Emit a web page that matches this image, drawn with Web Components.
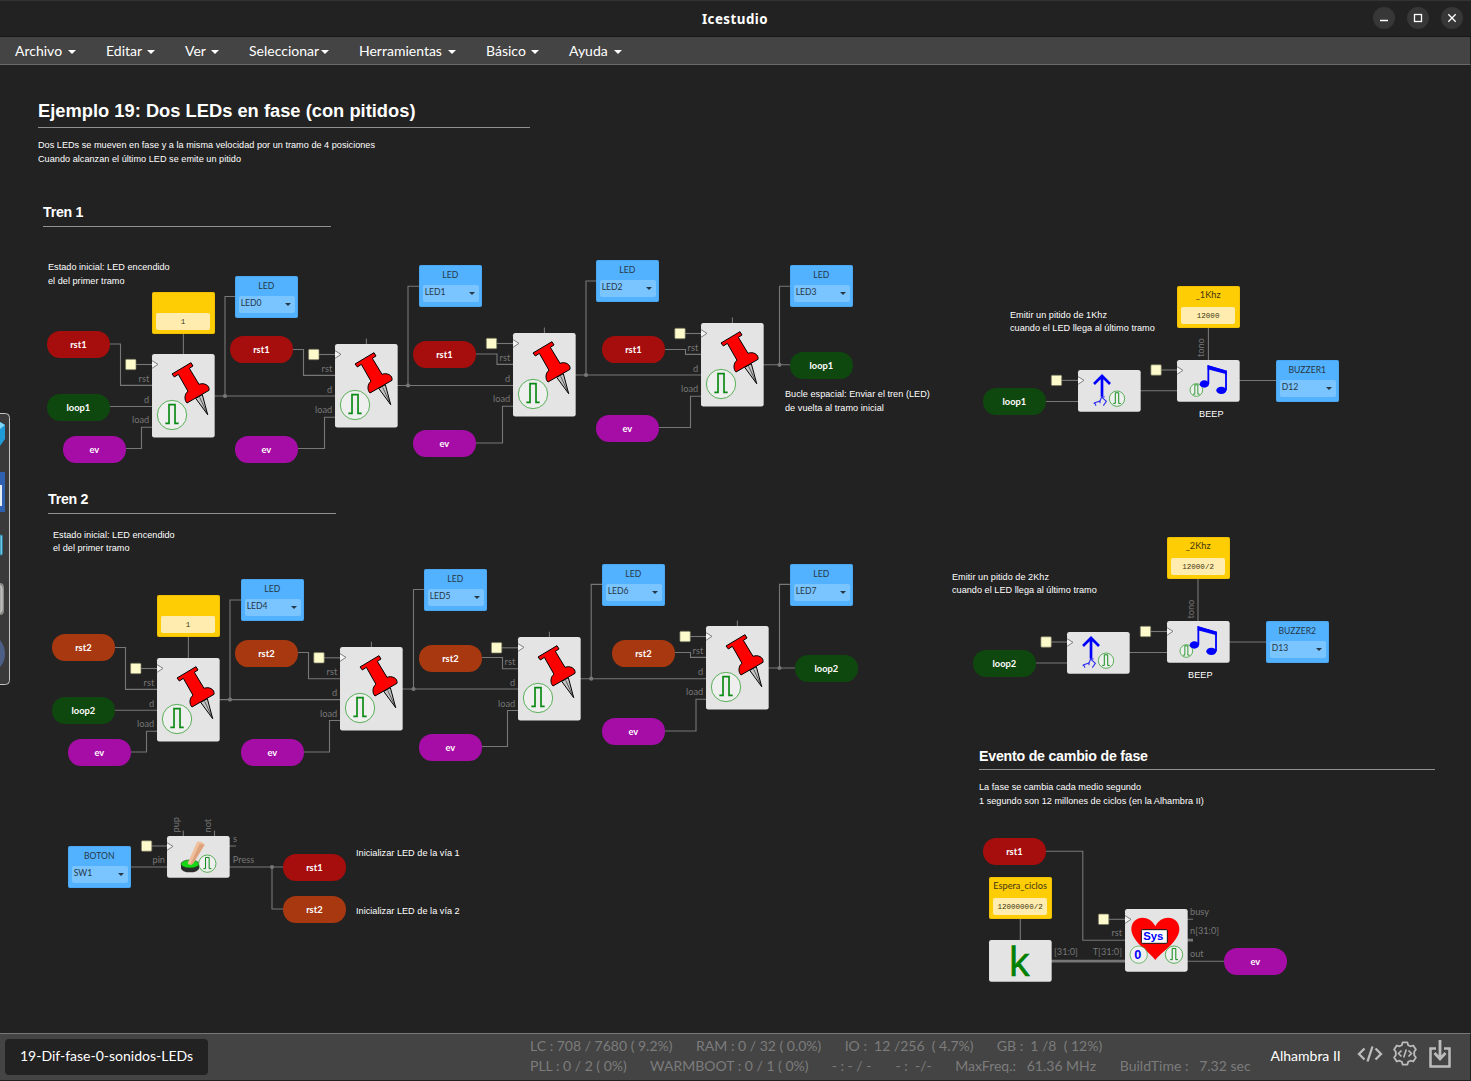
<!DOCTYPE html>
<html lang="es">
<head>
<meta charset="utf-8">
<title>Icestudio</title>
<style>
html,body{margin:0;height:100%;background:#222;overflow:hidden}
body{font-family:Lato,"Liberation Sans",sans-serif}
</style>
</head>
<body>
<ice-app></ice-app>
<script>
const TOP = 65;
const define = (name, render, css) => customElements.define(name, class extends HTMLElement {
  connectedCallback() {
    if (this.shadowRoot) return;
    const root = this.attachShadow({mode: 'open'});
    root.innerHTML = `<style>${css}</style>` + render(this);
  }
});
/* Diagram nodes live on a free canvas and carry their own coordinates. */
const defineNode = (name, render, css = '') => customElements.define(name, class extends HTMLElement {
  connectedCallback() {
    if (this.shadowRoot) return;
    const root = this.attachShadow({mode: 'open'});
    const x = +this.getAttribute('x'), y = +this.getAttribute('y') - TOP;
    root.innerHTML = `<style>:host{position:absolute;left:${x}px;top:${y}px;display:block;box-sizing:border-box}${css}</style>` + render(this);
  }
});

define('window-bar', () => `
  <span class="side"></span><span class="title"><slot></slot></span>
  <span class="side btns">
    <svg viewBox="0 0 22 22"><path d="M7 13.5h8"/></svg>
    <svg viewBox="0 0 22 22"><rect x="7.5" y="7.5" width="7" height="7"/></svg>
    <svg viewBox="0 0 22 22"><path d="M7.3 7.3l7.4 7.4M14.7 7.3l-7.4 7.4"/></svg>
  </span>`, `
  :host{display:flex;height:37px;box-sizing:border-box;background:#222;border-top:1px solid #333;border-bottom:1px solid #171717;align-items:center;color:#fff}
  .side{flex:1;display:flex;justify-content:flex-end}
  .btns{gap:12px;padding-right:8px;box-sizing:border-box;position:relative;top:-.5px}
  .title{font:bold 13.3px "Noto Sans",sans-serif;letter-spacing:.5px;padding-left:7px}
  svg{width:22px;height:22px;background:#373737;border-radius:50%;fill:none;stroke:#fff;stroke-width:1.3}`);

define('menu-item', () => `<span><slot></slot></span><i></i>`, `
  :host{display:flex;align-items:center;padding:0 15px;box-sizing:border-box;justify-content:space-between}
  i{border:4px solid transparent;border-top-color:#fff;border-bottom:0;margin-top:2px}`);

define('menu-bar', () => `<slot></slot>`, `
  :host{display:flex;height:28px;box-sizing:border-box;background:#444;border-bottom:1px solid #6b6b6b;color:#fff;font-size:14px;border-right:1px solid #222}`);

defineNode('ice-note', el => {
  const rows = el.getAttribute('rows').split('|'), lens = (el.getAttribute('lens') || '').split('|');
  const size = el.getAttribute('size') || 9.14, lh = +(el.getAttribute('lh') || 13.7);
  return `<svg width="1" height="1">${rows.map((r, i) => `<text x="0" y="${i * lh}" ${lens[i] ? `textLength="${lens[i]}"` : ''} style="font-size:${size}px">${r}</text>`).join('')}</svg>`;
}, `svg{overflow:visible;display:block;fill:#fff;font-family:"Liberation Sans",sans-serif} :host([bold]) svg{font-weight:bold}`);

defineNode('ice-rule', el => `<div style="width:${el.getAttribute('w')}px"></div>`, `div{height:1px;background:#909090}`);

defineNode('ice-label', el => `<span><slot></slot></span>`, `
  :host{width:62.7px;height:26.4px;border-radius:13.2px;background:var(--c);display:flex;align-items:center;justify-content:center;color:#fff;font:bold 9.3px Lato,sans-serif}
  :host([kind=rst1]){--c:#a60d0d} :host([kind=rst2]){--c:#a83810} :host([kind=loop]){--c:#0f480f} :host([kind=ev]){--c:#a60da6}`);

defineNode('ice-io', el => `<b>${el.getAttribute('name')}</b><div><span>${el.getAttribute('pin')}</span><i></i></div>`, `
  :host{width:62.7px;height:41.8px;border-radius:2px;background:#53b2ff;color:#263746;font:8.6px Lato,sans-serif;display:flex;flex-direction:column;padding:3.6px 3.2px 4.4px 4px;align-items:stretch;box-shadow:inset 0 0 0 .5px #2d7dbe66}
  b{font-weight:400;height:12px;line-height:12px;text-align:center;margin-left:-1px}
  div{margin-top:4.3px;height:17px;background:#7ac4ff;border-radius:2px;display:flex;align-items:flex-start;justify-content:space-between;padding:0 3.5px 0 1.7px;line-height:15.4px}
  i{border:3px solid transparent;border-top:3.7px solid #263746;border-bottom:0;margin-top:7.5px}`);

defineNode('ice-const', el => `<b>${el.getAttribute('name') || ''}</b><div>${el.getAttribute('value')}</div>`, `
  :host{width:62.7px;height:41.8px;border-radius:2px;background:#ffcd04;color:#3d3512;font:9.2px Lato,sans-serif;display:flex;flex-direction:column;padding:3px 4.5px 3.5px 4px;box-shadow:inset 0 0 0 .5px #b6920066}
  b{font-weight:400;height:12px;line-height:11.4px;text-align:center;white-space:nowrap}
  div{margin-top:6px;height:17px;background:#ffecae;border-radius:2px;font:7.55px/19px "Liberation Mono",monospace;text-align:center}`);

const pulse = (cx, cy, r, s) => `<circle cx="${cx}" cy="${cy}" r="${r}" fill="#efefef" stroke="#34a034" stroke-width="2.4"/>
  <path transform="translate(${cx} ${cy}) scale(${s})" d="M-20 25H-9V-31H9V25H20" fill="none" stroke="#0a8a14" stroke-width="5"/>`;
const art = {
  pin: `<path d="M131 133L167 182L151 122Z" fill="#c4c4c4" stroke="#000" stroke-width="3" stroke-linejoin="round"/><path d="M143 130L167 182" stroke="#222" stroke-width="2"/>
    <path d="M60 60L117 26L123 36L112 43L141 91C156 85 174 94 171 109L105 147C96 139 97 119 108 112L79 61L67 69Z" fill="#f00" stroke="#000" stroke-width="3" stroke-linejoin="round"/>` + pulse(60, 183, 44, 1),
  up: `<path d="M72 80V20M48 42L72 18L96 42" fill="none" stroke="#00f" stroke-width="8"/><path d="M72 78L66 93L50 98L47 101M50 98L54 107M66 90L66 100M72 82L85 94L76 107M72 82L80 80" fill="none" stroke="#2a2af4" stroke-width="3.2"/>` + pulse(117, 86, 23, .57),
  beep: pulse(58, 90, 19, .5) + `<path d="M94 72V19L147 34V91" fill="none" stroke="#00f" stroke-width="5.5"/><path d="M92 16L149 32V43L92 28Z" fill="#00f"/><ellipse cx="82" cy="72" rx="14" ry="11" fill="#00f"/><ellipse cx="133" cy="91" rx="15" ry="11" fill="#00f"/>`,
  button: `<path d="M42 86V97A27 12 0 0 0 96 97V86Z" fill="#292c2a"/><ellipse cx="69" cy="84" rx="27" ry="12" fill="#17d817" stroke="#164c16" stroke-width="2"/>
    <path d="M90 18Q103 13 114 26L80 80Q70 92 62 82Z" fill="#efbf9c"/><path d="M112 26L80 80Q75 87 70 85L98 24Z" fill="#dda17b"/>` + pulse(121, 83, 26, .6),
  k: `<text x="90.500" y="109" text-anchor="middle" font-family="Open Sans,sans-serif" font-size="122" fill="#008000" stroke="#008000" stroke-width="2">k</text>`,
  sys: `<path d="M91 153C78 132 19 99 19 60C19 21 72 13 91 52C110 13 163 21 163 60C163 99 105 132 91 153Z" fill="#f00"/>
    <rect x="49" y="62" width="78" height="41" rx="3" fill="#fff" stroke="#111" stroke-width="3"/><text x="85" y="92" text-anchor="middle" font-family="Liberation Sans,sans-serif" font-weight="bold" font-size="34" fill="#00f">Sys</text>
    <circle cx="41" cy="137" r="26" fill="#efefef" stroke="#34a034" stroke-width="2"/><text x="38" y="149" text-anchor="middle" font-family="Liberation Sans,sans-serif" font-weight="bold" font-size="38" fill="#00f">0</text>` + pulse(147, 137, 26, .6)
};
const heights = {pin: 83.6, sys: 62.7};
defineNode('ice-block', el => {
  const kind = el.getAttribute('kind'), h = heights[kind] || 41.8;
  const clock = kind === 'k' ? '' : `<path d="M0 20L18 31L0 43" fill="#f4f4f4" stroke="#777" stroke-width="2.8"/>`;
  return `<svg width="62.7" height="${h}" viewBox="0 0 188 ${h * 3}"><rect width="188" height="${h * 3}" rx="7" fill="#e4e4e4"/>${clock}${art[kind]}</svg>`;
}, `svg{display:block;overflow:visible}`);

define('ice-wires', () => {
  const w = [], dots = [], squares = [], labels = [];
  const line = d => w.push(`<path d="${d}"/>`);
  const text = (x, y, t, end) => labels.push(`<text x="${x}" y="${y - .3}" ${end ? 'text-anchor="end"' : ''}>${t}</text>`);
  const vert = (x, y, t) => labels.push(`<text transform="translate(${x} ${y}) rotate(-90)">${t}</text>`);
  const clk = (cx, cy, to) => { line(`M${cx} ${cy}H${to}`); squares.push(`<rect x="${cx - 5.4}" y="${cy - 5.2}" width="10.4" height="10.4" rx="1"/>`); };
  const pins = [
    [152,354,131,[110,344,120.5],[126,448.5,141.5],20],
    [335,344,314,[293,349.5,303.5],[298,448.5,324.5],5.5],
    [513,333,491.7,[476,354,497],[476,443,502.5],5.5],
    [701,323,680.2,[665,349.5,685.5],[659,427.5,690.5],5.5],
    [157,658,136,[115,647.5,125.5],[131,752,146.5],21],
    [340,647.3,319.2,[298,652.5,308.5],[304,752,329.5],5.5],
    [518,637.3,496.8,[482,657.5,502.5],[482,746.5,507.5],5.5],
    [706,626,685.3,[675,652.5,690.5],[665,731,696],5.5]];
  for (const [x, y, sq, r, e, up] of pins) {
    clk(sq, y + 10.5, x);
    line(`M${r[0]} ${r[1]}H${r[2]}V${y + 31.4}H${x}`);
    line(`M${e[0]} ${e[1]}H${e[2]}V${y + 73.2}H${x}`);
    line(`M${x + 31.4} ${y}v-${up}`);
    text(x - 2.8, y + 28, 'rst', 1); text(x - 2.8, y + 48.9, 'd', 1); text(x - 2.8, y + 69.6, 'load', 1);
  }
  line('M110 406.5H152'); line('M115 710.2H157');
  for (const [x, y, d, to, ly, lx] of [
    [214,396,225,335,296.5,235],[397,385.5,408,513,286.2,419],[575,375,586,701,281,596],[763,364.8,779.5,790,286.2,790],
    [219,699.6,230,340,600,241],[402,689,413.5,518,589.5,424],[580,678.7,591.2,706,584.4,602],[768,668,779.5,795,584.4,790]]) {
    line(`M${x} ${y}H${to}M${d} ${y}V${ly}H${lx}`); dots.push(`<circle cx="${d}" cy="${y}" r="2.1"/>`);
  }
  clk(1056.7,380.4,1078); clk(1156.3,370,1177); clk(1046.3,642,1067); clk(1145.7,631.5,1167); clk(146.8,846,167); clk(1103.8,919.3,1125);
  line('M1046 401.5H1078M1140 390.7H1177M1239 380.5H1276M1208.4 327V360');
  line('M1036 663H1067M1129 652.5H1167M1229 642H1266M1198 578V621');
  line('M130 867H167M229 846H236M229 867H283M272 867V909H283M183.3 830.5V836M214.5 830.5V836');
  dots.push('<circle cx="272" cy="867" r="2.1"/>');
  line('M1046 851.3H1082.8V940.2H1125M1020.3 918V940M1187 919.3H1193M1187 961.2H1224');
  w.push('<path d="M1051 961.2H1125M1187 940.2H1193" stroke-width="2.8"/>');
  text(165,863,'pin',1); text(233,842,'s'); text(232.8,863,'Press'); text(1054,955,'[31:0]'); text(1122,955,'T[31:0]',1);
  text(1122,936,'rst',1); text(1190,915,'busy'); text(1190,934,'n[31:0]'); text(1190,957,'out');
  vert(1204,357,'tono'); vert(1194,618.5,'tono'); vert(179.2,832.5,'pup'); vert(211,832.5,'not');
  return `<svg viewBox="0 ${TOP} 1471 968" width="1471" height="968"><g fill="none" stroke="#777" stroke-width="1.1">${w.join('')}</g>
    <g fill="#777">${dots.join('')}</g><g fill="#fdfacb" stroke="#77765f" stroke-width=".7">${squares.join('')}</g>
    <g fill="#777" font-family="Lato,sans-serif" font-size="9.2">${labels.join('')}</g></svg>`;
}, `:host{display:block}svg{display:block}`);

/* The desktop dock shows through at the left edge of the window. */
define('side-dock', () => `<svg width="11" height="274" viewBox="0 412 11 274">
  <rect x="-6" y="413.5" width="15.5" height="271" rx="4" fill="#3a3a3a" stroke="#c4c4c4"/>
  <path d="M0 422L5 425V439L0 446Z" fill="#209bd8"/><path d="M0 422L5 425L0 429Z" fill="#80d6f7"/>
  <rect y="472" width="5" height="40" fill="#3060b0"/><rect y="485" width="2" height="21" fill="#e8edf4"/>
  <path d="M0 535H1.5Q2.5 535 2.5 537V553Q2.5 555 1.5 555H0Z" fill="#6fc9e8" stroke="#2b7895"/>
  <path d="M0 583Q4 583 4 588V611Q4 615 0 615Z" fill="#8b8c87"/><path d="M0 585.5Q2 586 2 589V609Q2 612 0 612.5" fill="#aaa" stroke="#ddd" stroke-width=".8"/>
  <path d="M0 640Q5 646 5 654Q5 662 0 667Z" fill="#4c5f86"/></svg>`,
  `:host{position:absolute;left:0;top:${412 - TOP}px;display:block}svg{display:block}`);

const N = (tag, x, y, attrs = '', body = '') => `<${tag} x="${x}" y="${y}" ${attrs}>${body}</${tag}>`;
define('ice-canvas', () => {
  let h = '<ice-wires></ice-wires>';
  const lab = (x, y, t) => h += N('ice-label', x, y, `kind="${t.startsWith('loop') ? 'loop' : t}"`, t);
  [[47,331.3,'rst1'],[47,394.3,'loop1'],[63,436.3,'ev'],[230,336.3,'rst1'],[235,436.3,'ev'],[413,341.3,'rst1'],[413,430.3,'ev'],[602,336.3,'rst1'],[596,415.3,'ev'],[790,352.3,'loop1'],
   [52,634.3,'rst2'],[52,697.3,'loop2'],[68,739.3,'ev'],[235,640.3,'rst2'],[241,739.3,'ev'],[419,645.3,'rst2'],[419,734.3,'ev'],[612,640.3,'rst2'],[602,718.3,'ev'],[795,655.3,'loop2'],
   [983,388.3,'loop1'],[973,650.3,'loop2'],[283,854.3,'rst1'],[283,896.3,'rst2'],[983,838.3,'rst1'],[1224,948.3,'ev']].forEach(a => lab(...a));
  [[235,276,'LED','LED0'],[419,265,'LED','LED1'],[596,260,'LED','LED2'],[790,265,'LED','LED3'],[241,579,'LED','LED4'],[424,569,'LED','LED5'],[602,564,'LED','LED6'],[790,564,'LED','LED7'],
   [1276,360,'BUZZER1','D12'],[1266,621,'BUZZER2','D13'],[68,846,'BOTON','SW1']].forEach(([x, y, n, p]) => h += N('ice-io', x, y, `name="${n}" pin="${p}"`));
  [[152,292,'','1'],[157,595.2,'','1'],[1177,286,'_1Khz','12000'],[1167,537,'_2Khz','12000/2'],[989,877,'Espera_ciclos','12000000/2']].forEach(([x, y, n, v]) => h += N('ice-const', x, y, `name="${n}" value="${v}"`));
  [[152,354,'pin'],[335,344,'pin'],[513,333,'pin'],[701,323,'pin'],[157,658,'pin'],[340,647,'pin'],[518,637,'pin'],[706,626,'pin'],
   [1078,370,'up'],[1177,360,'beep'],[1067,632,'up'],[1167,621,'beep'],[167,836,'button'],[989,940,'k'],[1125,909,'sys']].forEach(([x, y, k]) => h += N('ice-block', x, y, `kind="${k}"`));
  const note = (x, y, rows, lens, extra = '') => h += N('ice-note', x, y, `rows="${rows}" lens="${lens}" ${extra}`);
  note(38,117,'Ejemplo 19: Dos LEDs en fase (con pitidos)','377.5','bold size="18.3"');
  note(43,217,'Tren 1','40.5','bold size="14.2"'); note(48,504,'Tren 2','40.5','bold size="14.2"');
  note(979,761,'Evento de cambio de fase','169','bold size="14.2"');
  note(38,148,'Dos LEDs se mueven en fase y a la misma velocidad por un tramo de 4 posiciones|Cuando alcanzan el último LED se emite un pitido','337|203');
  note(48,270,'Estado inicial: LED encendido|el del primer tramo','121.7|76.5');
  note(53,538,'Estado inicial: LED encendido|el del primer tramo','121.7|76.5','lh="13.2"');
  note(785,397,'Bucle espacial: Enviar el tren (LED)|de vuelta al tramo inicial','144.8|98.8','lh="14"');
  note(1010,318,'Emitir un pitido de 1Khz|cuando el LED llega al último tramo','97|144.8','lh="13.2"');
  note(952,580,'Emitir un pitido de 2Khz|cuando el LED llega al último tramo','97|144.8','lh="13.2"');
  note(1199,417,'BEEP','24.5'); note(1188,678,'BEEP','24.5');
  note(356,856,'Inicializar LED de la vía 1','103.7'); note(356,914,'Inicializar LED de la vía 2','103.7');
  note(979,790,'La fase se cambia cada medio segundo|1 segundo son 12 millones de ciclos (en la Alhambra II)','162|224.8','lh="14"');
  [[38,127,492],[43,226,288],[48,513,288],[979,769,456]].forEach(([x, y, w]) => h += N('ice-rule', x, y, `w="${w}"`));
  return h + '<side-dock></side-dock>';
}, `:host{display:block;position:relative;flex:1;min-height:0;overflow:hidden;background:#222}`);

define('status-bar', () => {
  const row = a => `<div class="row">${a.map(([t, w]) => `<span style="width:${w}px">${t}</span>`).join('')}</div>`;
  return `<div class="tab">19-Dif-fase-0-sonidos-LEDs</div>
  <div class="stats">${row([['LC : 708 / 7680 ( 9.2%)',142.5],['RAM : 0 / 32 ( 0.0%)',125],['IO :  12 /256  ( 4.7%)',128.5],['GB :  1 /8  ( 12%)',107]])}
  ${row([['PLL : 0 / 2 ( 0%)',96.5],['WARMBOOT : 0 / 1 ( 0%)',158],['- : - / -',40.3],['- :  -/-',36],['MaxFreq.:   61.36 MHz',141],['BuildTime :   7.32 sec',131]])}</div>
  <div class="board">Alhambra II</div>
  <div class="icons"><svg width="26" height="24" viewBox="0 0 26 24"><path d="M7.5 6.5L2 12l5.5 5.5M18.5 6.5L24 12l-5.5 5.500M15.500 4.500L10.500 19.500" stroke-width="2.3"/></svg>
  <svg width="26" height="28" viewBox="0 0 26 28"><path d="M10.6 2.4h4.8l.8 2.8 2.3 1.1 2.7-.8 2.7 4-1.7 2.3v3.4l1.7 2.3-2.7 4-2.7-.8-2.3 1.1-.8 2.8h-4.8l-.8-2.8-2.3-1.1-2.7.8-2.7-4 1.7-2.3v-3.4L2.1 9.5l2.7-4 2.7.8 2.3-1.1z" stroke-width="1.8" stroke-linejoin="round"/><path d="M9.500 10.500L6.500 13.500l3 3M16.500 10.500l3 3-3 3M14.300 9.500l-2.600 8" stroke-width="1.6"/></svg>
  <svg width="24" height="30" viewBox="0 0 24 30"><path d="M8 9.500H2.500V27.500H21.500V9.500H16" stroke-width="2.5"/><path d="M12 1V19M6.500 14L12 20L17.500 14" stroke-width="2.8"/></svg></div>`;
}, `:host{display:flex;height:48px;box-sizing:border-box;background:#444;border-top:1px solid #777;border-bottom:1px solid #222;border-right:1px solid #222;padding:5px 15px 4px 5px;color:#fff;font-size:14px}
  .tab{flex:none;width:203px;height:36px;line-height:34px;background:#222;border-radius:4px;padding-left:15px;box-sizing:border-box;white-space:nowrap}
  .stats{flex:none;margin-left:322px;width:722px;margin-top:-3px;color:#7c7c7c}
  .row{display:flex;gap:23.6px;height:20px;line-height:20px;white-space:pre}.row span{flex:none}
  .board{flex:none;margin-left:18.5px;width:86px;line-height:34px;white-space:nowrap}
  .icons{display:flex;align-items:center;gap:10px;height:30px}
  .icons svg:first-child{margin-right:-1px}
  svg{fill:none;stroke:#bcbcbc;flex:none}`);

define('ice-app', () => `<window-bar>Icestudio</window-bar>
  <menu-bar>${[['Archivo',91],['Editar',79],['Ver',64],['Seleccionar',110],['Herramientas',127],['Básico',83],['Ayuda',83]].map(([t, w]) => `<menu-item style="width:${w}px">${t}</menu-item>`).join('')}</menu-bar>
  <ice-canvas></ice-canvas><status-bar></status-bar>`,
  `:host{display:flex;flex-direction:column;width:1471px;height:1081px;background:#222}`);
</script>
</body>
</html>
